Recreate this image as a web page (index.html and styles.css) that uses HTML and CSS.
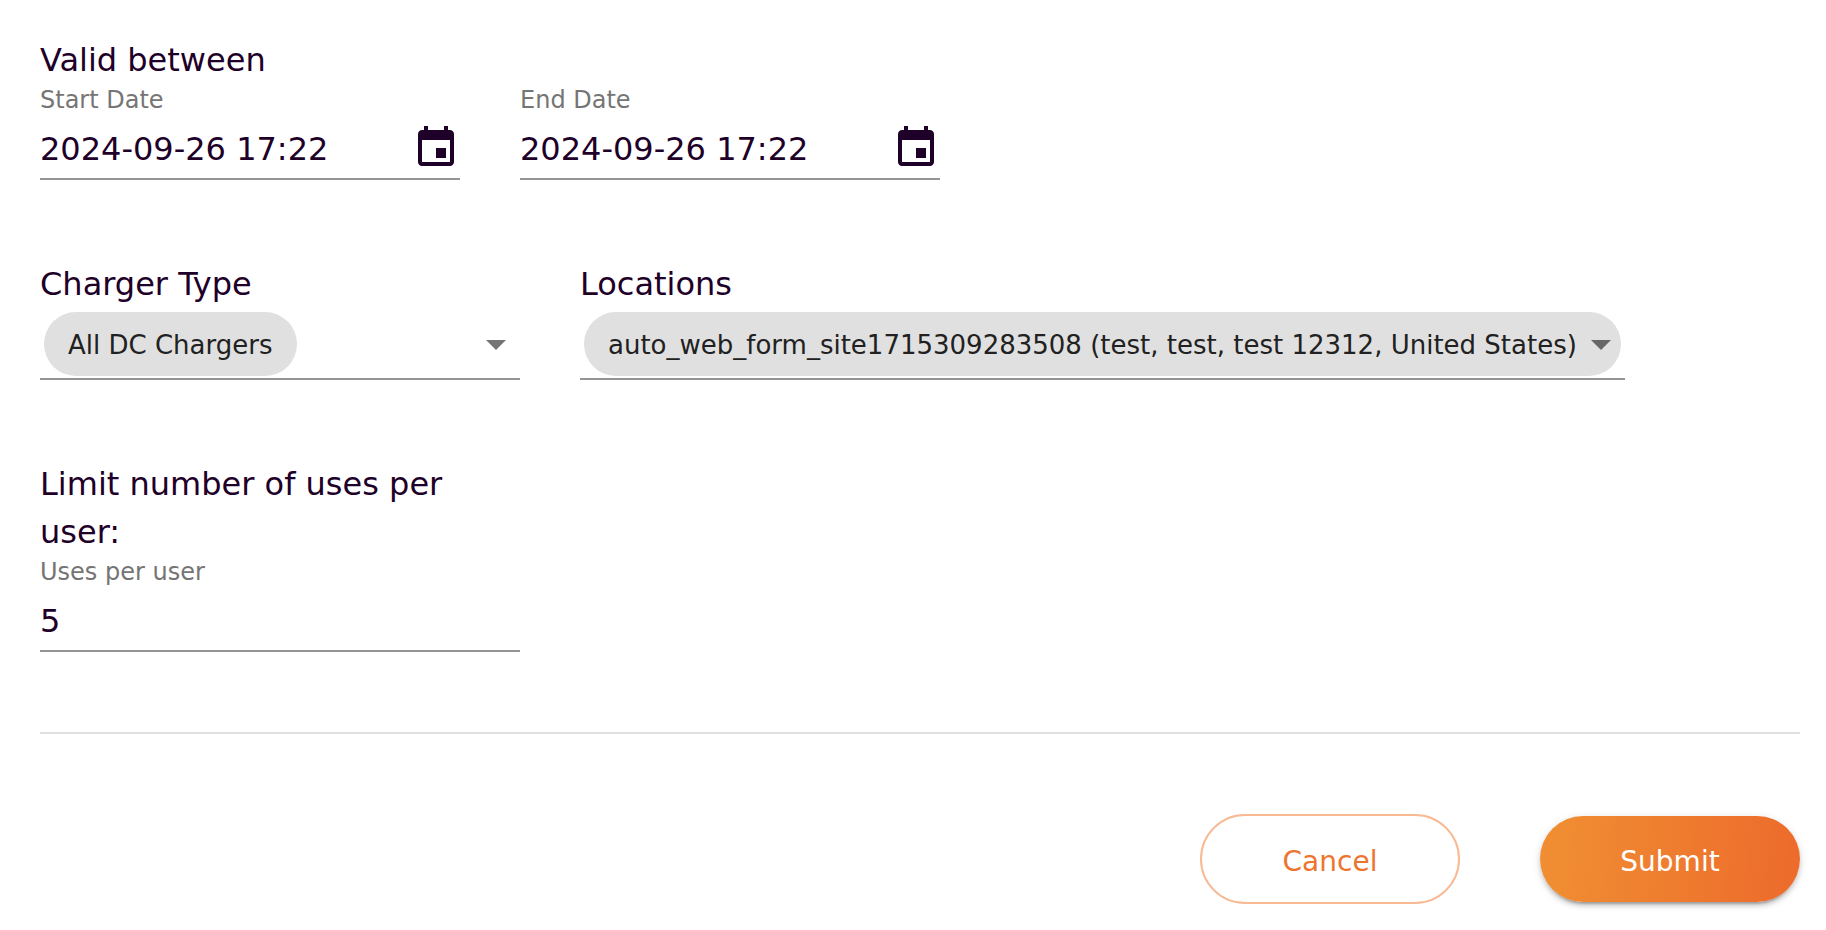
FILE: index.html
```html
<!DOCTYPE html>
<html lang="en">
<head>
    <meta charset="UTF-8">
    <meta name="viewport" content="width=device-width, initial-scale=1.0">
    <title>Coupon Form</title>
    <link rel="stylesheet" href="styles.css">
</head>
<body>

    <form class="coupon-form">
        <fieldset class="section">
            <legend class="title">Valid between</legend>
            <div class="row">
                <div class="field date-field">
                    <label class="caption" for="start-date">Start Date</label>
                    <div class="input-box">
                        <input type="text" id="start-date" value="2024-09-26 17:22">
                        <button type="button" class="icon-button" aria-label="Choose start date">
                            <svg class="icon" viewBox="0 0 24 24"><path d="M17 12h-5v5h5v-5zM16 1v2H8V1H6v2H5c-1.11 0-1.99.9-1.99 2L3 19c0 1.1.89 2 2 2h14c1.1 0 2-.9 2-2V5c0-1.1-.9-2-2-2h-1V1h-2zm3 18H5V8h14v11z"/></svg>
                        </button>
                    </div>
                </div>
                <div class="field date-field">
                    <label class="caption" for="end-date">End Date</label>
                    <div class="input-box">
                        <input type="text" id="end-date" value="2024-09-26 17:22">
                        <button type="button" class="icon-button" aria-label="Choose end date">
                            <svg class="icon" viewBox="0 0 24 24"><path d="M17 12h-5v5h5v-5zM16 1v2H8V1H6v2H5c-1.11 0-1.99.9-1.99 2L3 19c0 1.1.89 2 2 2h14c1.1 0 2-.9 2-2V5c0-1.1-.9-2-2-2h-1V1h-2zm3 18H5V8h14v11z"/></svg>
                        </button>
                    </div>
                </div>
            </div>
        </fieldset>

        <div class="row">
            <div class="field narrow">
                <label class="title" for="charger-type">Charger Type</label>
                <div class="select-box">
                    <select class="chip" id="charger-type">
                        <option>All DC Chargers</option>
                    </select>
                    <svg class="arrow" viewBox="0 0 24 24"><path d="M7 10l5 5 5-5z"/></svg>
                </div>
            </div>
            <div class="field wide">
                <label class="title" for="locations">Locations</label>
                <div class="select-box">
                    <select class="chip" id="locations">
                        <option>auto_web_form_site1715309283508 (test, test, test 12312, United States)</option>
                    </select>
                    <svg class="arrow" viewBox="0 0 24 24"><path d="M7 10l5 5 5-5z"/></svg>
                </div>
            </div>
        </div>

        <fieldset class="section narrow">
            <legend class="title">Limit number of uses per user:</legend>
            <div class="field">
                <label class="caption" for="uses">Uses per user</label>
                <div class="input-box">
                    <input type="text" inputmode="numeric" id="uses" value="5">
                </div>
            </div>
        </fieldset>

        <hr>

        <div class="actions">
            <button type="button" class="btn cancel">Cancel</button>
            <button type="submit" class="btn submit">Submit</button>
        </div>
    </form>

</body>
</html>
```

FILE: styles.css
```css
* {
    box-sizing: border-box;
}

body {
    margin: 0;
    font-family: Verdana, 'DejaVu Sans', sans-serif;
    font-size: 32px;
    line-height: 48px;
    color: #1e0028;
    background-color: #fff;
}

input, select, button {
    font-family: inherit;
    color: inherit;
    margin: 0;
}

.coupon-form {
    display: flex;
    flex-direction: column;
    gap: 80px;
    padding: 36px 26px 26px 40px;
}

.section {
    min-width: 0;
    margin: 0;
    padding: 0;
    border: none;
}

.title {
    display: block;
    padding: 0;
}

.row {
    display: flex;
    align-items: flex-start;
    gap: 60px;
}

.date-field {
    width: 420px;
}

.narrow {
    width: 480px;
}

.wide {
    flex: 0 1 1045px;
    min-width: 0;
}

.wide .chip {
    width: 100%;
}

.caption {
    display: block;
    padding-top: 4px;
    margin-bottom: 4px;
    font-size: 24px;
    line-height: 24px;
    color: #757575;
}

.input-box {
    display: flex;
    align-items: center;
    height: 64px;
    padding-top: 2px;
    border-bottom: 2px solid #949494;
}

.input-box input {
    flex: 1;
    min-width: 0;
    height: 60px;
    padding: 2px 0 0;
    font-size: 32px;
    border: none;
    outline: none;
    background: none;
}

.icon-button {
    display: flex;
    padding: 0;
    border: none;
    background: none;
    cursor: pointer;
}

.icon {
    width: 48px;
    height: 48px;
    fill: #1e0028;
}

.select-box {
    position: relative;
    padding: 4px 4px 2px;
    line-height: 0;
    border-bottom: 2px solid #949494;
}

.chip {
    height: 64px;
    padding: 2px 24px 0;
    font-size: 26px;
    line-height: 39px;
    color: #212121;
    background-color: #e0e0e0;
    border: none;
    border-radius: 32px;
    outline: none;
    appearance: none;
    cursor: pointer;
}

/* the arrow lies over the chip when the chip fills the field */
.arrow {
    position: absolute;
    top: 12px;
    right: 0;
    width: 48px;
    height: 48px;
    fill: rgba(0, 0, 0, 0.54);
    pointer-events: none;
}

hr {
    width: 100%;
    height: 2px;
    margin: 0;
    border: none;
    background-color: #e0e0e0;
}

.actions {
    display: flex;
    justify-content: flex-end;
    align-items: center;
    gap: 80px;
}

.btn {
    width: 260px;
    height: 86px;
    padding: 4px 0 0;
    font-size: 28px;
    border: none;
    border-radius: 45px;
    cursor: pointer;
}

.cancel {
    height: 90px;
    color: #ed752f;
    background: none;
    border: 2px solid #f8b993;
}

.submit {
    color: #fff;
    background: linear-gradient(95deg, #f08c32 10%, #ed6c2c 95%);
    box-shadow: 0 6px 2px -4px rgba(0, 0, 0, 0.2), 0 4px 4px rgba(0, 0, 0, 0.14), 0 2px 10px rgba(0, 0, 0, 0.12);
}
```
